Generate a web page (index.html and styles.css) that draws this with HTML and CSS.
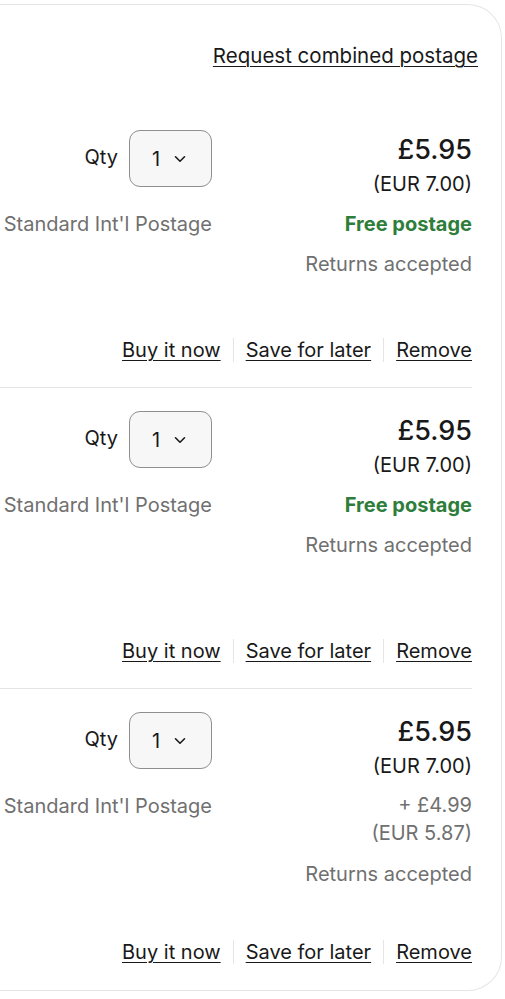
FILE: index.html
```html
<!DOCTYPE html>
<html lang="en">
<head>
<meta charset="utf-8">
<title>Cart</title>
<link rel="stylesheet" href="styles.css">
</head>
<body>
<div class="card">
  <div class="card-head">
    <a class="link head-link" href="#">Request combined postage</a>
  </div>

  <div class="item item--short">
    <div class="item-main">
      <div class="left">
        <div class="qty-row">
          <span class="qty-label">Qty</span>
          <span class="qty-select">1
            <svg class="chev" width="12" height="8" viewBox="0 0 12 8"><path d="M1.5 1.8 6 6.2l4.5-4.4" fill="none" stroke="#191919" stroke-width="1.6" stroke-linecap="round" stroke-linejoin="round"/></svg>
          </span>
        </div>
        <div class="ship-label">Standard Int'l Postage</div>
      </div>
      <div class="right">
        <div class="price">£5.95</div>
        <div class="conv">(EUR 7.00)</div>
        <div class="free">Free postage</div>
        <div class="muted returns">Returns accepted</div>
      </div>
    </div>
    <div class="actions">
      <a class="link" href="#">Buy it now</a><span class="sep"></span><a class="link" href="#">Save for later</a><span class="sep"></span><a class="link" href="#">Remove</a>
    </div>
  </div>

  <div class="item">
    <div class="item-main">
      <div class="left">
        <div class="qty-row">
          <span class="qty-label">Qty</span>
          <span class="qty-select">1
            <svg class="chev" width="12" height="8" viewBox="0 0 12 8"><path d="M1.5 1.8 6 6.2l4.5-4.4" fill="none" stroke="#191919" stroke-width="1.6" stroke-linecap="round" stroke-linejoin="round"/></svg>
          </span>
        </div>
        <div class="ship-label">Standard Int'l Postage</div>
      </div>
      <div class="right">
        <div class="price">£5.95</div>
        <div class="conv">(EUR 7.00)</div>
        <div class="free">Free postage</div>
        <div class="muted returns">Returns accepted</div>
      </div>
    </div>
    <div class="actions">
      <a class="link" href="#">Buy it now</a><span class="sep"></span><a class="link" href="#">Save for later</a><span class="sep"></span><a class="link" href="#">Remove</a>
    </div>
  </div>

  <div class="item item--last">
    <div class="item-main">
      <div class="left">
        <div class="qty-row">
          <span class="qty-label">Qty</span>
          <span class="qty-select">1
            <svg class="chev" width="12" height="8" viewBox="0 0 12 8"><path d="M1.5 1.8 6 6.2l4.5-4.4" fill="none" stroke="#191919" stroke-width="1.6" stroke-linecap="round" stroke-linejoin="round"/></svg>
          </span>
        </div>
        <div class="ship-label">Standard Int'l Postage</div>
      </div>
      <div class="right">
        <div class="price">£5.95</div>
        <div class="conv">(EUR 7.00)</div>
        <div class="muted ship-cost">+ £4.99</div>
        <div class="muted ship-conv">(EUR 5.87)</div>
        <div class="muted returns returns--after">Returns accepted</div>
      </div>
    </div>
    <div class="actions">
      <a class="link" href="#">Buy it now</a><span class="sep"></span><a class="link" href="#">Save for later</a><span class="sep"></span><a class="link" href="#">Remove</a>
    </div>
  </div>
</div>
</body>
</html>
```

FILE: styles.css
```css
* { box-sizing: border-box; }

html, body {
  margin: 0;
  padding: 0;
  background: #ffffff;
}

body {
  font-family: "Inter", "Noto Sans", sans-serif;
  color: #191919;
  font-size: 20px;
}

.card {
  margin-top: 4px;
  width: 502px;
  border: 1px solid #e5e5e5;
  border-left: none;
  border-radius: 0 34px 34px 0;
  padding-bottom: 22px;
}

.card-head {
  display: flex;
  justify-content: flex-end;
  padding: 35px 23px 0 0;
  line-height: 32px;
}

.head-link { font-size: 20.5px; }

.link {
  color: #191919;
  text-decoration: underline;
  text-underline-offset: 3px;
  text-decoration-thickness: 1px;
}

.item {
  margin-right: 29px;
  padding-top: 58px;
  padding-bottom: 21px;
  border-bottom: 1px solid #e5e5e5;
}

.item + .item { padding-top: 23px; }

.item--last {
  border-bottom: none;
  padding-bottom: 0;
}

.item-main {
  display: flex;
  justify-content: space-between;
  align-items: flex-start;
  min-height: 224px;
}

.item--short .item-main { min-height: 204px; }

.left {
  width: 212px;
  display: flex;
  flex-direction: column;
  align-items: flex-end;
}

.qty-row {
  display: flex;
  align-items: center;
  gap: 11px;
}

.qty-label { margin-top: -3px; }

.qty-select {
  display: flex;
  align-items: center;
  gap: 14px;
  width: 83px;
  height: 57px;
  padding-left: 22px;
  border: 1px solid #8f8f8f;
  border-radius: 11px;
  background: #f7f7f7;
}

.chev { display: block; }

.ship-label {
  margin-top: 17px;
  line-height: 40px;
  color: #707070;
  white-space: nowrap;
}

.right {
  padding-top: 2px;
  text-align: right;
}

.price {
  font-size: 27px;
  font-weight: 500;
  line-height: 36px;
}

.conv { line-height: 32px; }

.free {
  margin-top: 4px;
  line-height: 40px;
  font-weight: 700;
  color: #2e7d3a;
}

.muted { color: #707070; }

.returns { line-height: 40px; }

.ship-cost {
  margin-top: 9px;
  line-height: 28px;
}

.ship-conv { line-height: 28px; }

.returns--after { margin-top: 7px; }

.actions {
  display: flex;
  justify-content: flex-end;
  align-items: center;
  line-height: 32px;
}

.sep {
  width: 1px;
  height: 24px;
  margin: 0 12px;
  background: #e5e5e5;
}
```
